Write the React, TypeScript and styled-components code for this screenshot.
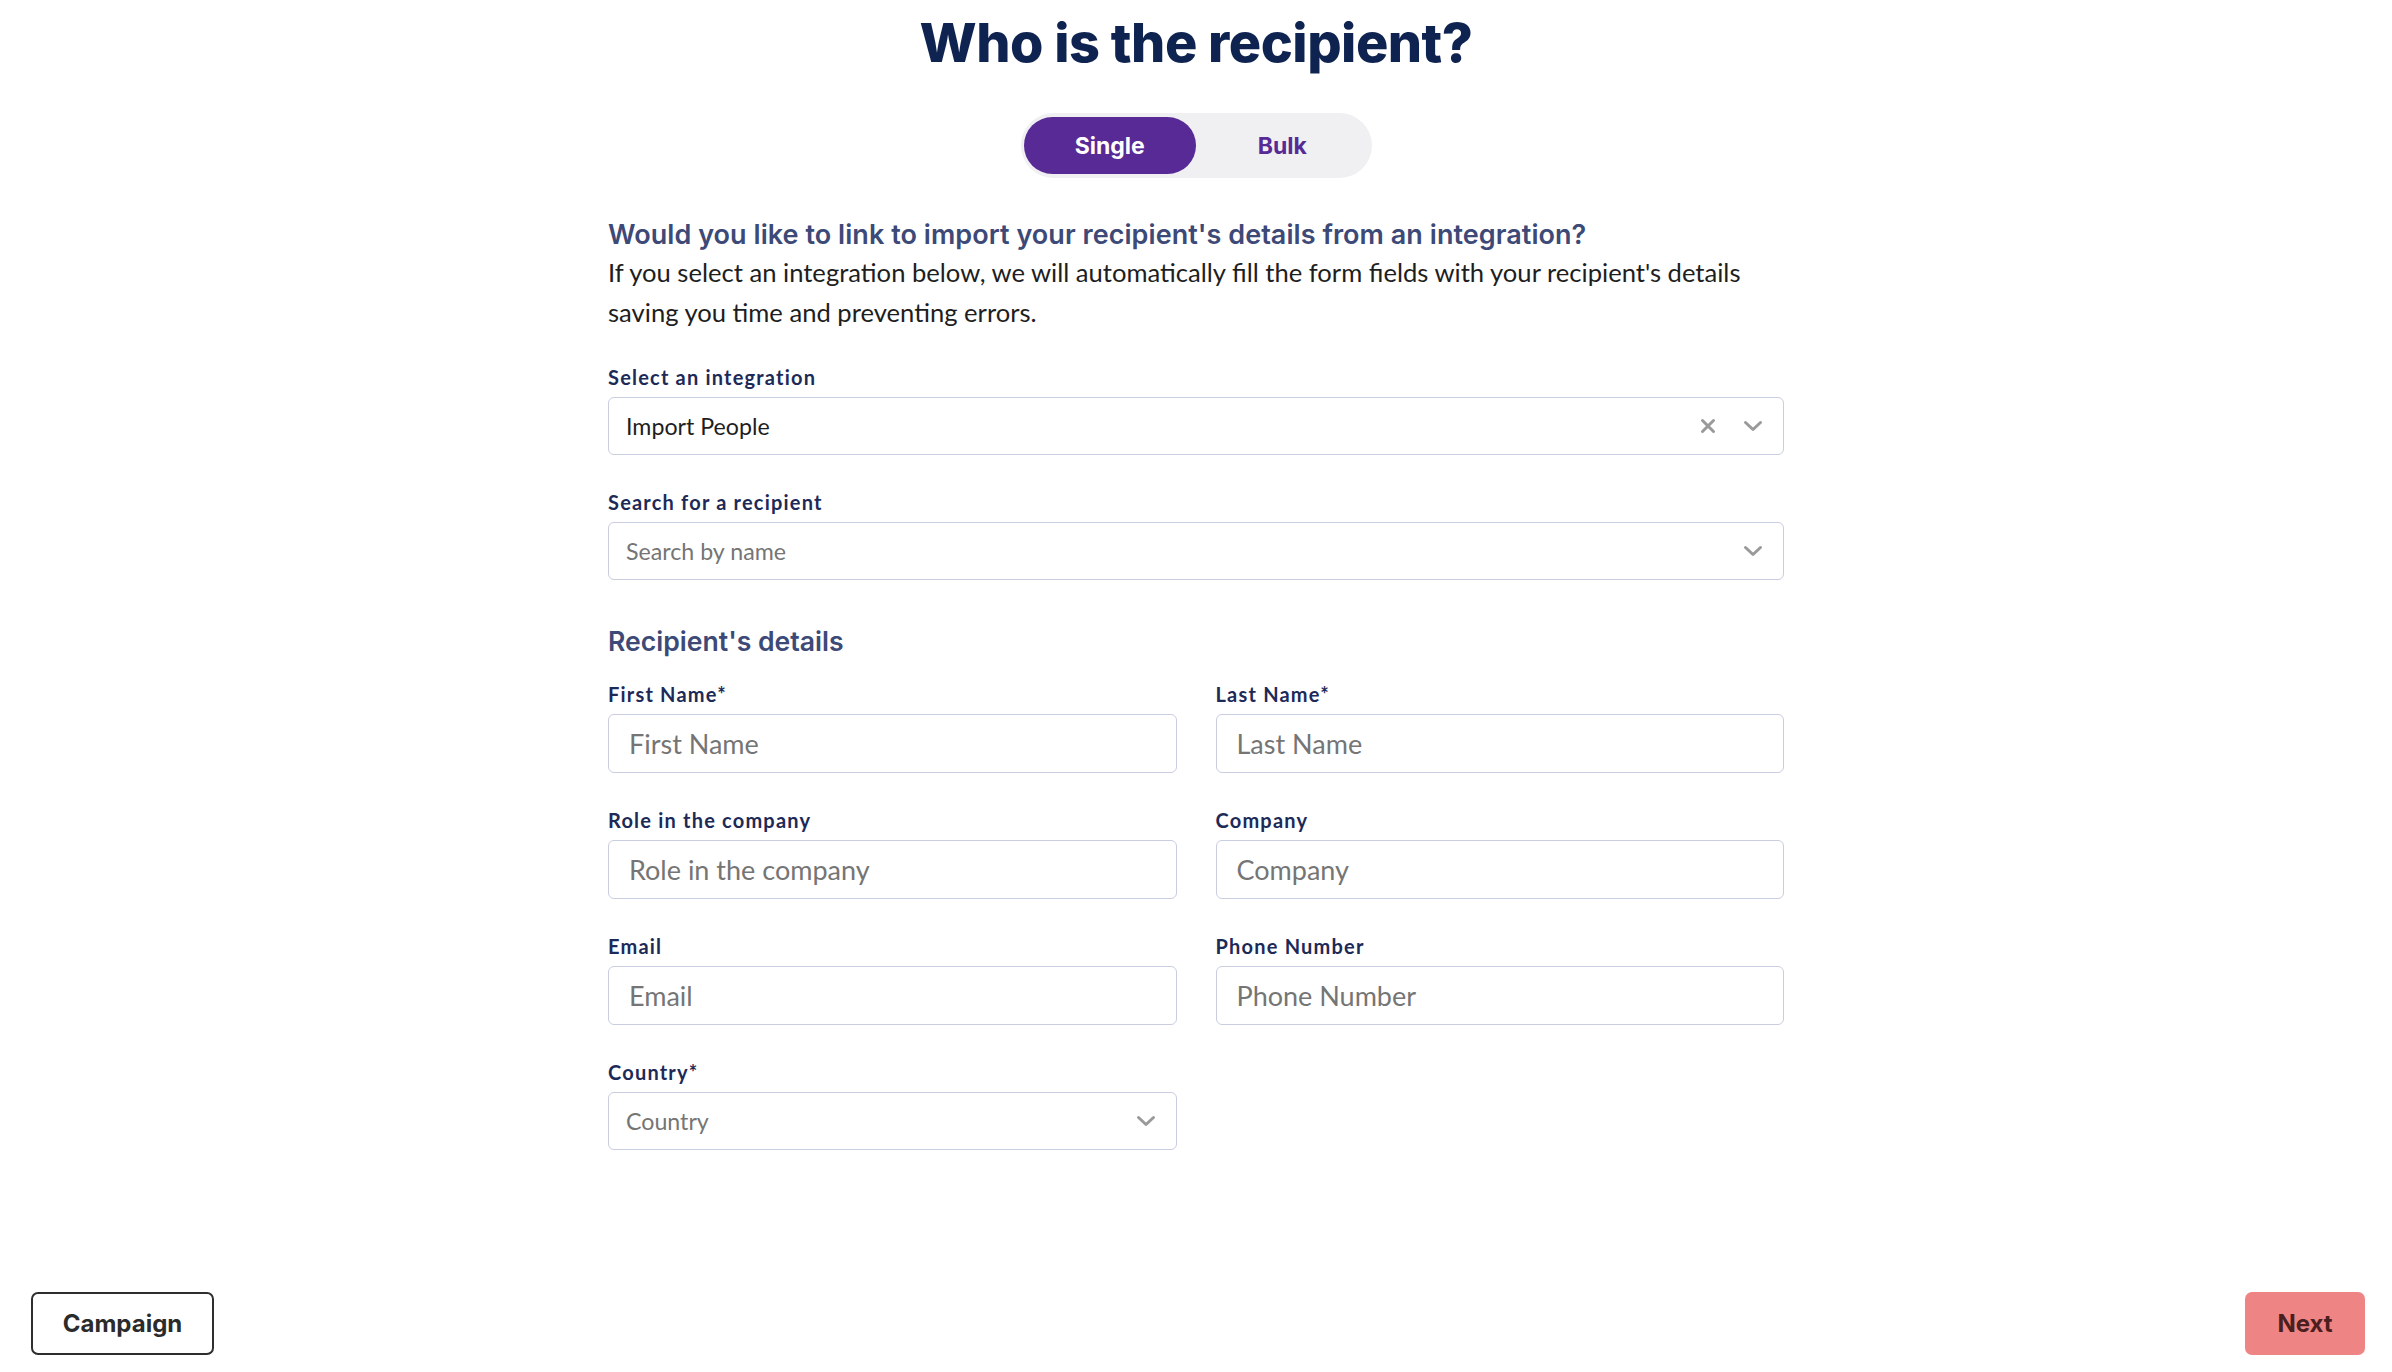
import styled, { createGlobalStyle } from "styled-components";

const GlobalStyle = createGlobalStyle`
  * {
    box-sizing: border-box;
  }
  body {
    margin: 0;
    background: #ffffff;
    font-family: "Lato", "Liberation Sans", sans-serif;
  }
`;

const ChevronDown = () => (
  <svg width="20" height="12" viewBox="0 0 20 12" fill="none">
    <path
      d="M2.5 2.5 L10 9.5 L17.5 2.5"
      stroke="#9a9a9a"
      strokeWidth="3"
      strokeLinecap="round"
      strokeLinejoin="round"
    />
  </svg>
);

const ClearIcon = () => (
  <svg width="16" height="16" viewBox="0 0 16 16" fill="none">
    <path
      d="M2.5 2.5 L13.5 13.5 M13.5 2.5 L2.5 13.5"
      stroke="#9a9a9a"
      strokeWidth="3"
      strokeLinecap="round"
    />
  </svg>
);

type FieldProps = {
  label: string;
  placeholder: string;
};

const TextField = ({ label, placeholder }: FieldProps) => (
  <Field>
    <Label>{label}</Label>
    <Input placeholder={placeholder} />
  </Field>
);

type SelectProps = {
  label: string;
  value?: string;
  placeholder?: string;
  clearable?: boolean;
};

const SelectField = ({ label, value, placeholder, clearable }: SelectProps) => (
  <Field>
    <Label>{label}</Label>
    <SelectBox>
      <SelectValue $muted={!value}>{value || placeholder}</SelectValue>
      <SelectIcons>
        {clearable && <ClearIcon />}
        <ChevronDown />
      </SelectIcons>
    </SelectBox>
  </Field>
);

const App = () => {
  return (
    <>
      <GlobalStyle />
      <Page>
        <Main>
          <Title>Who is the recipient?</Title>
          <Toggle>
            <ToggleButton $active>Single</ToggleButton>
            <ToggleButton>Bulk</ToggleButton>
          </Toggle>

          <Form>
            <Intro>
              <SectionHeading>
                Would you like to link to import your recipient's details from
                an integration?
              </SectionHeading>
              <Lead>
                If you select an integration below, we will automatically fill
                the form fields with your recipient's details saving you time
                and preventing errors.
              </Lead>
            </Intro>

            <Stack>
              <SelectField
                label="Select an integration"
                value="Import People"
                clearable
              />
              <SelectField
                label="Search for a recipient"
                placeholder="Search by name"
              />
            </Stack>

            <DetailsHeading>Recipient's details</DetailsHeading>

            <Grid>
              <TextField label="First Name*" placeholder="First Name" />
              <TextField label="Last Name*" placeholder="Last Name" />
              <TextField
                label="Role in the company"
                placeholder="Role in the company"
              />
              <TextField label="Company" placeholder="Company" />
              <TextField label="Email" placeholder="Email" />
              <TextField label="Phone Number" placeholder="Phone Number" />
              <SelectField label="Country*" placeholder="Country" />
            </Grid>
          </Form>
        </Main>

        <Footer>
          <OutlineButton>Campaign</OutlineButton>
          <PrimaryButton disabled>Next</PrimaryButton>
        </Footer>
      </Page>
    </>
  );
};

const Page = styled.div`
  min-height: 100vh;
  display: flex;
  flex-direction: column;
`;

const Main = styled.main`
  flex: 1;
  display: flex;
  flex-direction: column;
  align-items: center;
  padding-top: 10px;
`;

const Title = styled.h1`
  margin: 0;
  font-family: "Inter", "Liberation Sans", sans-serif;
  font-weight: 800;
  font-size: 54px;
  line-height: 66px;
  letter-spacing: -0.5px;
  color: #0f2351;
`;

const Toggle = styled.div`
  margin-top: 37px;
  display: grid;
  grid-template-columns: 1fr 1fr;
  width: 351px;
  height: 65px;
  padding: 4px 3px;
  border-radius: 33px;
  background: #f0f0f3;
`;

const ToggleButton = styled.button<{ $active?: boolean }>`
  border: none;
  border-radius: 29px;
  font-family: "Inter", "Liberation Sans", sans-serif;
  font-weight: 700;
  font-size: 23px;
  cursor: pointer;
  background: ${(p) => (p.$active ? "#582a96" : "transparent")};
  color: ${(p) => (p.$active ? "#ffffff" : "#582a96")};
`;

const Form = styled.div`
  width: 1176px;
  margin-top: 40px;
  display: flex;
  flex-direction: column;
`;

const Intro = styled.div`
  display: flex;
  flex-direction: column;
`;

const SectionHeading = styled.h2`
  margin: 0;
  font-family: "Inter", "Liberation Sans", sans-serif;
  font-weight: 600;
  font-size: 27px;
  line-height: 34px;
  letter-spacing: 0.05px;
  color: #3d4977;
`;

const Lead = styled.p`
  margin: 0;
  font-size: 25.6px;
  line-height: 40px;
  color: #1e1e1e;
`;

const Stack = styled.div`
  margin-top: 33px;
  display: flex;
  flex-direction: column;
  gap: 35px;
`;

const DetailsHeading = styled.h3`
  margin: 44px 0 0;
  font-family: "Inter", "Liberation Sans", sans-serif;
  font-weight: 600;
  font-size: 26.6px;
  line-height: 34px;
  letter-spacing: 0;
  color: #3d4977;
`;

const Grid = styled.div`
  margin-top: 24px;
  display: grid;
  grid-template-columns: 1fr 1fr;
  column-gap: 39px;
  row-gap: 35px;
`;

const Field = styled.div`
  display: flex;
  flex-direction: column;
  gap: 8px;
`;

const Label = styled.label`
  font-size: 20px;
  line-height: 24px;
  font-weight: 700;
  letter-spacing: 1.2px;
  color: #1d2a58;
`;

const Input = styled.input`
  height: 59px;
  padding: 0 20px;
  border: 1.5px solid #c9cde0;
  border-radius: 6px;
  font-family: "Lato", "Liberation Sans", sans-serif;
  font-size: 27px;
  color: #1e1e1e;
  background: #ffffff;
  outline: none;

  &::placeholder {
    color: #757575;
  }
`;

const SelectBox = styled.div`
  height: 58px;
  display: flex;
  align-items: center;
  justify-content: space-between;
  padding: 0 20px 0 17px;
  border: 1.5px solid #c9cde0;
  border-radius: 6px;
  background: #ffffff;
`;

const SelectValue = styled.span<{ $muted?: boolean }>`
  font-size: 23.2px;
  color: ${(p) => (p.$muted ? "#757575" : "#1e1e1e")};
`;

const SelectIcons = styled.div`
  display: flex;
  align-items: center;
  gap: 27px;
`;

const Footer = styled.footer`
  display: flex;
  justify-content: space-between;
  align-items: center;
  padding: 0 27px 17px 31px;
`;

const ButtonBase = styled.button`
  height: 63px;
  border-radius: 7px;
  font-family: "Inter", "Liberation Sans", sans-serif;
  font-weight: 700;
  font-size: 24px;
  cursor: pointer;
`;

const OutlineButton = styled(ButtonBase)`
  width: 183px;
  border: 2px solid #2e2e2e;
  background: #ffffff;
  color: #2b2b2b;
`;

const PrimaryButton = styled(ButtonBase)`
  width: 120px;
  border: none;
  background: #ef8484;
  color: #4b1e20;
`;

export default App;
